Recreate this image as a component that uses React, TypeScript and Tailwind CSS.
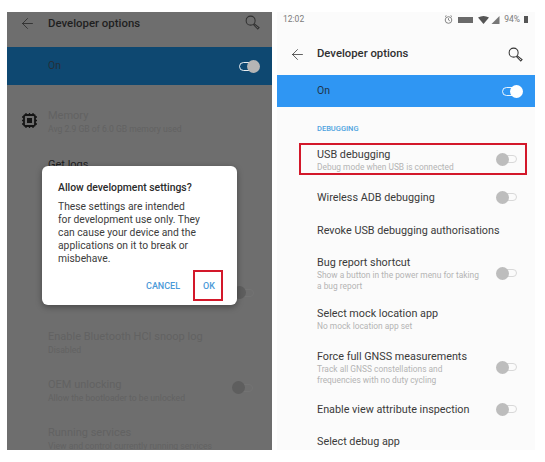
import React from 'react';
import { ArrowLeft } from 'lucide-react';

const Toggle = ({ on, dim }: { on?: boolean; dim?: boolean }) => {
    if (on) {
        return (
            <div className="flex items-center relative w-[21px] h-[13px]">
                <div className="w-[20px] h-[9px] rounded-full border border-white/90" />
                <div className={`absolute right-0 top-0 w-[13px] h-[13px] rounded-full ${dim ? 'bg-[#b5b5b5]' : 'bg-white'}`} />
            </div>
        );
    }
    return (
        <div className="flex items-center relative w-[21px] h-[13px]">
            <div className={`w-[20px] h-[8px] ml-[1px] rounded-full border ${dim ? 'border-[#737373]' : 'border-[#d8d8d8]'}`} />
            <div className={`absolute left-0 top-0 w-[13px] h-[13px] rounded-full ${dim ? 'bg-[#5e5e5e]' : 'bg-[#bdbdbd]'}`} />
        </div>
    );
};

const SearchIcon = ({ color }: { color: string }) => (
    <svg width="15" height="15" viewBox="0 0 16 16" fill="none" stroke={color} strokeWidth="1.1">
        <circle cx="6" cy="6" r="4.8" />
        <path d="M9.6 9.2 L15 13.4 L13.6 15 L8.8 10" />
    </svg>
);

const Row = ({ title, sub, toggle, h }: { title: string; sub?: string[]; toggle?: boolean; h: string }) => (
    <div className={`flex items-center justify-between pl-[40px] pr-[18px] shrink-0 ${h}`}>
        <div className="flex flex-col">
            <span className="text-[10.8px] leading-[15px] text-[#3a3a3a]">{title}</span>
            {sub?.map((s) => (
                <span key={s} className="text-[8.4px] leading-[11px] text-[#b4b4b4]">{s}</span>
            ))}
        </div>
        {toggle && <Toggle />}
    </div>
);

const DimRow = ({ title, sub, className }: { title: string; sub: string; className: string }) => (
    <div className={`flex flex-col pl-[41px] ${className}`}>
        <span className="text-[11px] leading-[15px] text-[#626262]">{title}</span>
        <span className="text-[8.6px] leading-[13px] text-[#626262]">{sub}</span>
    </div>
);

export default function App() {
    return (
        <div className="w-[545px] h-[462px] bg-white flex pt-[12px] pl-[7px] overflow-hidden font-['Roboto',sans-serif]">
            {/* Left phone, dimmed with dialog */}
            <div className="relative w-[265px] h-[438px] bg-[#6e6e6e] overflow-hidden">
                <div className="h-[35px] flex items-start pt-[3px] pl-[12px] pr-[12px]">
                    <ArrowLeft size={17} strokeWidth={1.1} color="#262626" />
                    <span className="ml-[12px] text-[11.4px] leading-[16px] font-medium text-[#1f1f1f]">Developer options</span>
                    <div className="ml-auto"><SearchIcon color="#303030" /></div>
                </div>
                <div className="h-[38px] bg-[#0e4871] flex items-center justify-between pl-[41px] pr-[12px]">
                    <span className="text-[10.5px] text-[#252f38]">On</span>
                    <Toggle on dim />
                </div>
                <div className="flex items-start pl-[14px] pt-[24px] h-[66px]">
                    <svg width="17" height="17" viewBox="0 0 17 17" className="mt-[3px]" fill="none">
                        <path d="M5 1v2M8.5 1v2M12 1v2M5 14v2M8.5 14v2M12 14v2M1 5h2M1 8.5h2M1 12h2M14 5h2M14 8.5h2M14 12h2" stroke="#151515" strokeWidth="1.3" />
                        <rect x="3" y="3" width="11" height="11" rx="1.5" stroke="#151515" strokeWidth="1.8" />
                        <rect x="6" y="6" width="5" height="5" fill="#151515" />
                    </svg>
                    <div className="flex flex-col ml-[10px] -mt-[1px]">
                        <span className="text-[11px] leading-[15px] text-[#626262]">Memory</span>
                        <span className="text-[8.6px] leading-[13px] text-[#626262]">Avg 2.9 GB of 6.0 GB memory used</span>
                    </div>
                </div>
                <div className="pl-[41px] h-[178px]">
                    <span className="text-[11px] leading-[15px] text-[#1f1f1f]">Get logs</span>
                </div>
                <DimRow title="Enable Bluetooth HCI snoop log" sub="Disabled" className="h-[48px]" />
                <div className="flex items-start justify-between pr-[19px] h-[48px]">
                    <DimRow title="OEM unlocking" sub="Allow the bootloader to be unlocked" className="" />
                    <div className="mt-[4px]"><Toggle dim /></div>
                </div>
                <DimRow title="Running services" sub="View and control currently running services" className="" />

                {/* Toggle peeking out from behind the dialog */}
                <div className="absolute left-[226px] top-[274px]"><Toggle dim /></div>

                {/* Dialog */}
                <div className="absolute left-[35px] top-[154px] w-[195px] h-[139px] bg-white rounded-[6px] shadow-[0_2px_6px_rgba(0,0,0,0.35)] pl-[16px] pt-[14px]">
                    <p className="text-[10.4px] leading-[15px] font-medium text-[#2b2b2b]">Allow development settings?</p>
                    <p className="mt-[5px] text-[10.3px] leading-[13px] text-[#3c3c3c] w-[172px]">
                        These settings are intended<br />for development use only. They<br />can cause your device and the<br />applications on it to break or<br />misbehave.
                    </p>
                    <div className="absolute left-[104px] top-[112px] flex items-center gap-[23px] text-[9px] font-medium leading-[16px] text-[#4b9ad8]">
                        <span>CANCEL</span>
                        <span>OK</span>
                    </div>
                    <div className="absolute left-[151px] top-[104px] w-[30px] h-[31px] border-2 border-[#d3182a]" />
                </div>
            </div>

            {/* Right phone */}
            <div className="ml-[5px] w-[258px] h-[438px] bg-[#fbfbfb] overflow-hidden flex flex-col">
                <div className="h-[15px] shrink-0 flex items-center justify-between pl-[6px] pr-[7px] text-[8.5px] text-[#7a7a7a]">
                    <span>12:02</span>
                    <div className="flex items-center">
                        <svg width="9" height="9" viewBox="0 0 9 9" fill="none" stroke="#777" strokeWidth="0.9">
                            <circle cx="4.5" cy="5" r="3.3" />
                            <path d="M4.5 3.2V5L5.8 5.8M1 1.6L2.4 .6M8 1.6L6.6 .6" />
                        </svg>
                        <div className="w-[15px] h-[6px] bg-[#6a6a6a] ml-[5px]" />
                        <svg width="11" height="8" viewBox="0 0 11 8" className="ml-[5px]"><path d="M0 1.5 Q5.5 -1.5 11 1.5 L5.5 8Z" fill="#555" /></svg>
                        <svg width="9" height="8" viewBox="0 0 8 8" className="ml-[2px]"><path d="M8 0V8H0Z" fill="#777" /></svg>
                        <span className="ml-[4px]">94%</span>
                        <div className="w-[4px] h-[7px] bg-[#555] ml-[4px]" />
                    </div>
                </div>
                <div className="h-[48px] shrink-0 flex items-center pt-[7px] pl-[12px] pr-[12px]">
                    <ArrowLeft size={17} strokeWidth={1} color="#222" />
                    <span className="ml-[11px] text-[11.3px] font-medium text-[#303030]">Developer options</span>
                    <div className="ml-auto"><SearchIcon color="#333" /></div>
                </div>
                <div className="h-[32px] bg-[#2f96f3] flex items-center justify-between pl-[40px] pr-[12px] shrink-0">
                    <span className="text-[10.5px] text-[#20354a]">On</span>
                    <Toggle on />
                </div>
                <div className="pl-[40px] pt-[17px] h-[36px] shrink-0 text-[7.5px] leading-[10px] font-medium text-[#4da3e0]">DEBUGGING</div>

                <div className="ml-[22px] mr-[8px] h-[32px] shrink-0 border-2 border-[#d3182a] flex items-center justify-between pl-[16px] pr-[8px]">
                    <div className="flex flex-col pt-[2px]">
                        <span className="text-[10.8px] leading-[15px] text-[#3a3a3a]">USB debugging</span>
                        <span className="text-[8.4px] leading-[11px] text-[#b4b4b4]">Debug mode when USB is connected</span>
                    </div>
                    <Toggle />
                </div>

                <Row title="Wireless ADB debugging" toggle h="h-[38px] mt-[3px]" />
                <Row title="Revoke USB debugging authorisations" h="h-[28px]" />
                <Row title="Bug report shortcut" sub={['Show a button in the power menu for taking', 'a bug report']} toggle h="h-[58px]" />
                <Row title="Select mock location app" sub={['No mock location app set']} h="h-[34px]" />
                <Row title="Force full GNSS measurements" sub={['Track all GNSS constellations and', 'frequencies with no duty cycling']} toggle h="h-[62px]" />
                <Row title="Enable view attribute inspection" toggle h="h-[22px]" />
                <Row title="Select debug app" h="h-[42px]" />
            </div>
        </div>
    );
}
